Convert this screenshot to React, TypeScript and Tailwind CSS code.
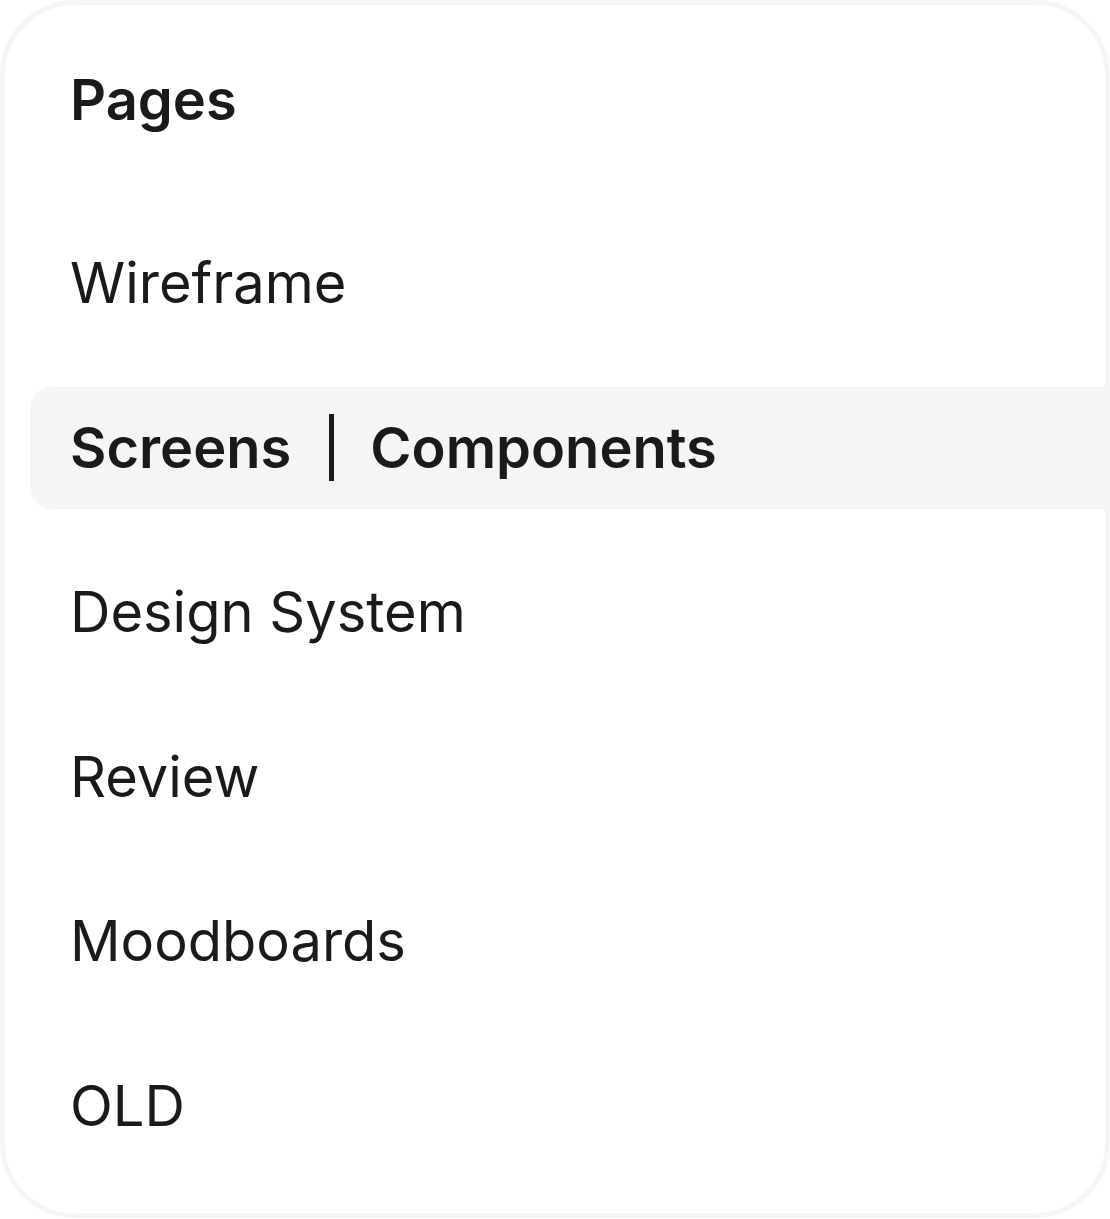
export default function App() {
  const pages = ['Wireframe', 'Screens | Components', 'Design System', 'Review', 'Moodboards', 'OLD']
  const active = 'Screens | Components'

  return (
    <div className="w-[1110px] bg-white" style={{ fontFamily: 'Inter, "Noto Sans", sans-serif' }}>
      <div className="flex flex-col overflow-hidden rounded-[75px] border-[5px] border-[#f5f5f5] bg-white pt-[60px] pb-[46px] text-[#1a1a1a]">
        <h2 className="pl-[65px] text-[56px] font-semibold leading-[70px]">Pages</h2>
        <ul className="mt-[87px] flex flex-col gap-[42.5px]">
          {pages.map((p) =>
            p === active ? (
              <li
                key={p}
                className="ml-[25px] flex h-[122px] items-center rounded-l-[22px] bg-[#f5f5f5] pl-[40px] text-[56px] font-semibold"
              >
                <span>Screens</span>
                <span className="mx-[38px] h-[67px] w-[5px] bg-[#1a1a1a]" />
                <span className="-ml-[2px]">Components</span>
              </li>
            ) : (
              <li key={p} className="flex h-[122px] items-center pl-[65px] text-[56px]">
                {p}
              </li>
            ),
          )}
        </ul>
      </div>
    </div>
  )
}
